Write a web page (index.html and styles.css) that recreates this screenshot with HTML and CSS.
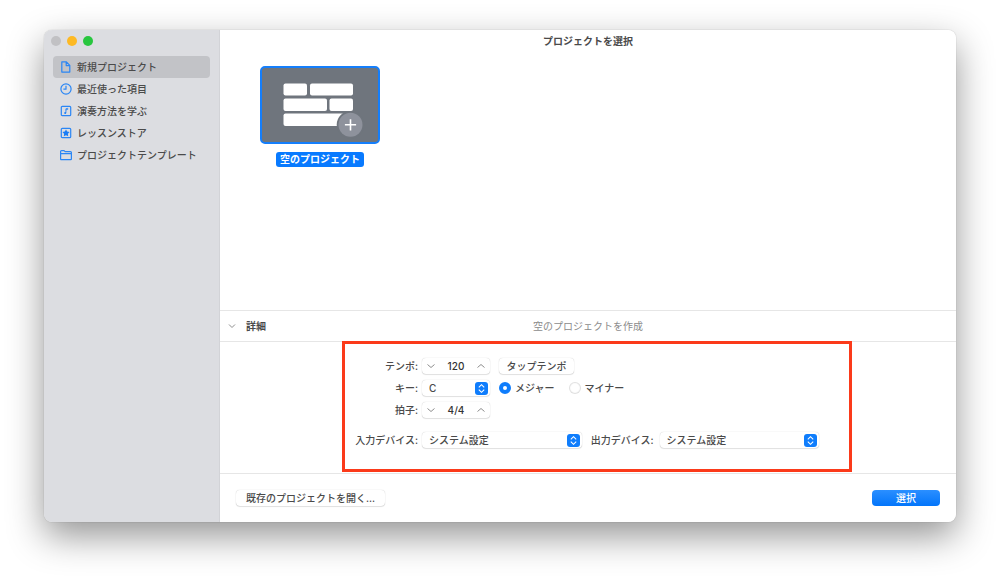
FILE: index.html
```html
<!DOCTYPE html>
<html lang="ja">
<head>
<meta charset="utf-8">
<title>プロジェクトを選択</title>
<link rel="stylesheet" href="styles.css">
</head>
<body>
<div class="window">
  <aside class="sidebar">
    <div class="lights">
      <button class="light light-off" aria-label="閉じる"></button>
      <button class="light light-yellow" aria-label="しまう"></button>
      <button class="light light-green" aria-label="拡大"></button>
    </div>
    <nav class="nav">
      <a class="nav-item active" href="#">
        <svg class="icon" viewBox="0 0 12 12"><path d="M1.800 .9h4.600l3.400 3.500v6.700h-8zM6.200 .9v3.700h3.600"/></svg>新規プロジェクト</a>
      <a class="nav-item" href="#">
        <svg class="icon" viewBox="0 0 12 12"><circle cx="6" cy="6" r="5.100"/><path d="M6 2.800V6.200H3.400"/></svg>最近使った項目</a>
      <a class="nav-item" href="#">
        <svg class="icon" viewBox="0 0 12 12"><rect x="1.300" y="1.300" width="9.400" height="9.400" rx="1"/><path stroke-width=".9" d="M5.900 7.900V3.800l1.800-.5v1.100l-1.800.5"/><circle class="solid" cx="5.200" cy="8" r="1"/></svg>演奏方法を学ぶ</a>
      <a class="nav-item" href="#">
        <svg class="icon" viewBox="0 0 12 12"><rect x="1.300" y="1.300" width="9.400" height="9.400" rx="1"/><path class="solid" d="M6 2.500l1.200 2.100 2.400.4-1.700 1.700.3 2.500L6 8.200 3.800 9.200l.3-2.500L2.400 5l2.400-.4z"/></svg>レッスンストア</a>
      <a class="nav-item" href="#">
        <svg class="icon" viewBox="0 0 12 12"><path d="M.6 10V2.600q0-.9.9-.9h2.600l1 1h5.400q.9 0 .9.9V10q0 .6-.7.6H1.300q-.7 0-.7-.6zM.6 4.600h10.800"/></svg>プロジェクトテンプレート</a>
    </nav>
  </aside>
  <main class="main">
    <h1 class="title">プロジェクトを選択</h1>
    <section class="gallery">
      <button class="project">
        <span class="thumb">
          <svg class="bricks" viewBox="0 0 116 74">
            <g fill="#fff">
              <rect x="21.500" y="15.500" width="23.500" height="12" rx="2"/>
              <rect x="48" y="15.500" width="43" height="12" rx="2"/>
              <rect x="21.500" y="30.500" width="43.500" height="12.500" rx="2"/>
              <rect x="67.500" y="30.500" width="23.500" height="12.500" rx="2"/>
              <rect x="21.500" y="45.500" width="62" height="12.500" rx="2"/>
            </g>
            <circle cx="88.500" cy="56.800" r="13.800" fill="#6f757d"/>
            <circle cx="88.500" cy="56.800" r="12" fill="#8e929c"/>
            <path d="M88.500 51.200v11.200M82.900 56.800h11.200" stroke="#fff" stroke-width="1.600"/>
          </svg>
        </span>
        <span class="project-name">空のプロジェクト</span>
      </button>
    </section>
    <header class="details-head">
      <button class="disclosure"><svg class="chev" viewBox="0 0 8 8"><path d="M1 2.500l3 3 3-3"/></svg>詳細</button>
      <p class="description">空のプロジェクトを作成</p>
    </header>
    <section class="details">
      <form class="settings">
        <div class="row">
          <label class="label" for="tempo">テンポ:</label>
          <div class="control stepper">
            <button type="button" class="step" aria-label="テンポを下げる"><svg class="chev" viewBox="0 0 8 8"><path d="M.5 2.500l3.500 3 3.500-3"/></svg></button>
            <input class="value" id="tempo" value="120">
            <button type="button" class="step" aria-label="テンポを上げる"><svg class="chev" viewBox="0 0 8 8"><path d="M.5 5.500l3.500-3 3.500 3"/></svg></button>
          </div>
          <button type="button" class="control tap">タップテンポ</button>
        </div>
        <div class="row">
          <label class="label" for="key">キー:</label>
          <div class="control picker picker-small">
            <select class="select" id="key"><option>C</option></select>
            <svg class="arrows" viewBox="0 0 12 12"><path d="M3.500 4.900L6 2.500l2.500 2.400M3.500 7.100L6 9.500l2.500-2.400"/></svg>
          </div>
          <div class="modes">
            <label class="mode"><input class="radio" type="radio" name="mode" checked>メジャー</label>
            <label class="mode"><input class="radio" type="radio" name="mode">マイナー</label>
          </div>
        </div>
        <div class="row">
          <label class="label" for="meter">拍子:</label>
          <div class="control stepper">
            <button type="button" class="step" aria-label="拍子を下げる"><svg class="chev" viewBox="0 0 8 8"><path d="M.5 2.500l3.500 3 3.500-3"/></svg></button>
            <input class="value" id="meter" value="4/4">
            <button type="button" class="step" aria-label="拍子を上げる"><svg class="chev" viewBox="0 0 8 8"><path d="M.5 5.500l3.500-3 3.500 3"/></svg></button>
          </div>
        </div>
        <div class="row devices">
          <label class="label" for="input">入力デバイス:</label>
          <div class="control picker">
            <select class="select" id="input"><option>システム設定</option></select>
            <svg class="arrows" viewBox="0 0 12 12"><path d="M3.500 4.900L6 2.500l2.500 2.400M3.500 7.100L6 9.500l2.500-2.400"/></svg>
          </div>
          <label class="label label-output" for="output">出力デバイス:</label>
          <div class="control picker">
            <select class="select" id="output"><option>システム設定</option></select>
            <svg class="arrows" viewBox="0 0 12 12"><path d="M3.500 4.900L6 2.500l2.500 2.400M3.500 7.100L6 9.500l2.500-2.400"/></svg>
          </div>
        </div>
      </form>
    </section>
    <footer class="footer">
      <button class="control open">既存のプロジェクトを開く...</button>
      <button class="choose">選択</button>
    </footer>
  </main>
</div>
</body>
</html>
```
FILE: styles.css
```css
* { box-sizing: border-box; }

body {
  margin: 0;
  min-height: 100vh;
  display: flex;
  padding: 30px 44px 59px;
  background: #fff;
  color: #4a4a4a;
  font: 500 10px/16px Inter, "Noto Sans CJK JP", sans-serif;
}

button, input, select {
  font: inherit;
  color: inherit;
  border: 0;
  padding: 0;
  margin: 0;
  background: none;
}

.window {
  flex: 1;
  display: flex;
  border-radius: 8px;
  box-shadow: 0 0 1px rgba(0, 0, 0, .35), 0 14px 36px rgba(0, 0, 0, .42);
}

.sidebar {
  width: 176px;
  flex: none;
  padding: 6px 9px;
  background: #dcdde1;
  border-right: 1px solid #d2d3d7;
  border-radius: 8px 0 0 8px;
}

.lights { display: flex; gap: 6px; margin: 0 -2px; height: 20px; }
.light { width: 10px; height: 10px; border-radius: 50%; }
.light-off { background: #c1c1c4; }
.light-yellow { background: #fdb924; }
.light-green { background: #28c63f; }

.nav-item {
  display: flex;
  align-items: center;
  gap: 5px;
  height: 22px;
  padding: 0 7px;
  border-radius: 4px;
  color: inherit;
  text-decoration: none;
}
.nav-item.active { background: #c2c3c7; }
.icon {
  width: 12px;
  height: 12px;
  fill: none;
  stroke: #2a86f5;
  stroke-width: 1.2;
  stroke-linejoin: round;
}
.icon .solid { fill: #1a7df5; stroke: none; }

.main {
  flex: 1;
  min-width: 0;
  display: flex;
  flex-direction: column;
  background: #fff;
  border-radius: 0 8px 8px 0;
}

.title {
  margin: 0;
  padding: 3px 0;
  font-size: 10px;
  font-weight: 700;
  text-align: center;
}

.gallery { flex: 1; padding: 14px 40px; }
.project { display: flex; flex-direction: column; align-items: center; gap: 8px; }
.thumb {
  display: block;
  width: 120px;
  border: 2px solid #147efb;
  border-radius: 5px;
  background: #6f757d;
}
.bricks { display: block; width: 100%; }
.project-name {
  padding: 0 4px;
  border-radius: 3px;
  background: #087aff;
  color: #fff;
  font-weight: 700;
  line-height: 15px;
}

.details-head {
  display: grid;
  grid-template-columns: 1fr auto 1fr;
  align-items: center;
  height: 31px;
  padding: 0 8px;
  border-top: 1px solid #e6e6e6;
}
.disclosure { display: flex; align-items: center; gap: 10px; font-weight: 700; }
.description { margin: 0; color: #8c8c8c; font-weight: 400; }
.chev { width: 8px; height: 8px; fill: none; stroke: #8e8e8e; stroke-width: 1; }

.details {
  display: flex;
  padding: 0 104px 1px 122px;
  border-top: 1px solid #e6e6e6;
  border-bottom: 1px solid #e6e6e6;
}
.settings {
  flex: 1;
  display: flex;
  flex-direction: column;
  gap: 6px;
  margin-top: -1px;
  padding: 14px 30px 21px 10px;
  border: 3px solid #fb3a1a;
}
.row { display: flex; align-items: center; height: 16px; }
.devices { margin-top: 8px; }
.label { width: 63px; flex: none; margin-right: 4px; text-align: right; white-space: nowrap; }
.label-output { margin-left: 9px; margin-right: 6px; }

.control {
  height: 16px;
  border-radius: 4px;
  background: #fff;
  box-shadow: 0 0 1px rgba(0, 0, 0, .25), 0 1px 1px rgba(0, 0, 0, .1);
}
.stepper { display: flex; align-items: center; width: 68px; padding: 0 5px; }
.step { display: flex; }
.value { flex: 1; min-width: 0; height: 16px; text-align: center; color: #333; }
.tap { width: 75px; margin-left: 9px; }

.picker { flex: 1; display: grid; align-items: center; }
.picker-small { flex: none; width: 68px; }
.select {
  grid-area: 1 / 1;
  width: 100%;
  height: 16px;
  padding: 0 20px 0 7px;
  appearance: none;
}
.arrows {
  grid-area: 1 / 1;
  justify-self: end;
  width: 13px;
  height: 13px;
  margin-right: 2px;
  border-radius: 3px;
  background: #0f7dfc;
  fill: none;
  stroke: #fff;
  stroke-width: 1;
  pointer-events: none;
}

.modes { display: flex; gap: 14px; margin-left: 9px; }
.mode { display: flex; align-items: center; gap: 4px; }
.radio {
  appearance: none;
  width: 12px;
  height: 12px;
  border-radius: 50%;
  background: #fff;
  box-shadow: inset 0 0 1px 1px #dedede;
}
.radio:checked { border: 4px solid #0f7dfc; box-shadow: none; }

.footer {
  display: flex;
  align-items: center;
  justify-content: space-between;
  height: 48px;
  padding: 0 16px;
}
.open { padding: 0 10px; }
.choose {
  width: 68px;
  height: 16px;
  border-radius: 4px;
  background: linear-gradient(#2b8fff, #0375fa);
  color: #fff;
}
```
